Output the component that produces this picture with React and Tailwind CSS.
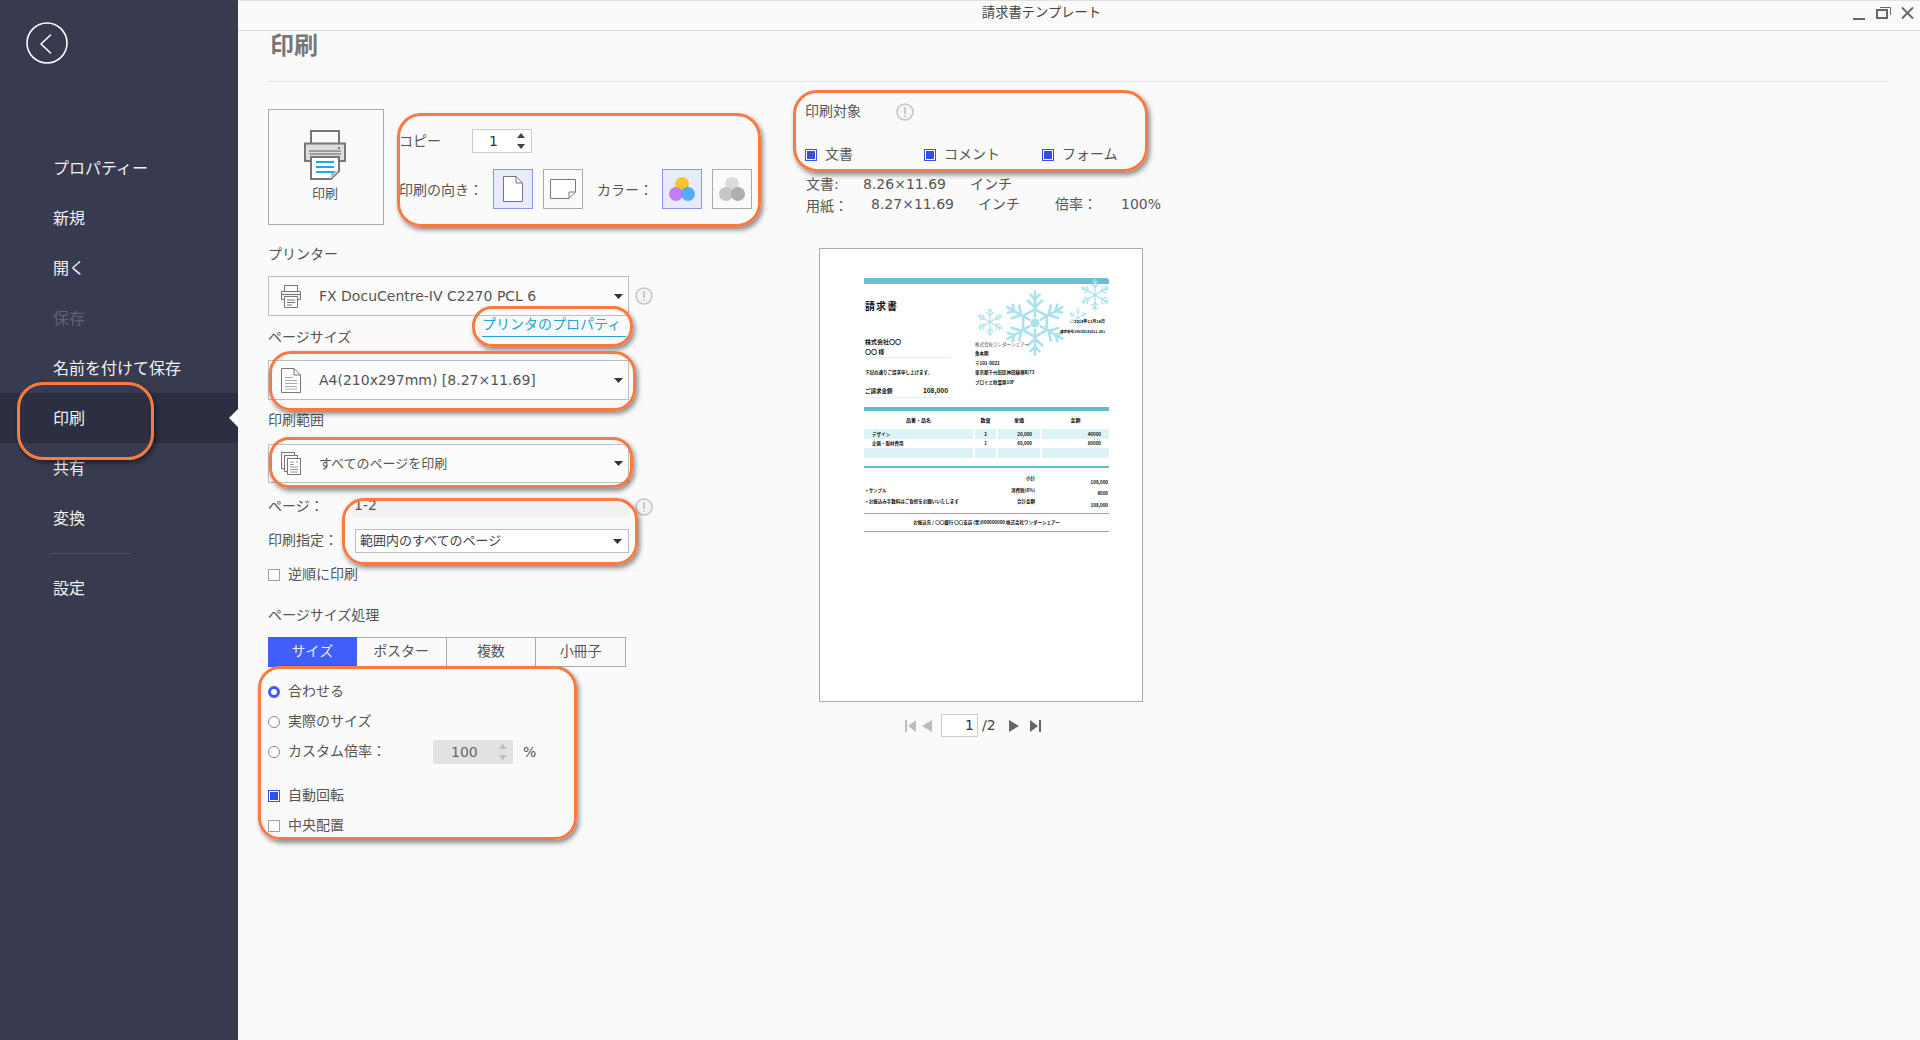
import React from "react";

const LATIN = "font-['DejaVu_Sans','Noto_Sans_CJK_JP',sans-serif]";

function Snowflake({ className, inner }) {
  const arms = [0, 60, 120, 180, 240, 300];
  return (
    <svg viewBox="-50 -50 100 100" className={className} fill="none" stroke="#ace2eb" strokeLinecap="round">
      {arms.map((a) => (
        <g key={a} transform={`rotate(${a})`} strokeWidth="4">
          <path d="M0 -10 V-48" />
          <path d="M0 -24 L-11 -34 M0 -24 L11 -34" />
          <path d="M0 -36 L-7 -43 M0 -36 L7 -43" />
        </g>
      ))}
      {inner ? <path d="M0 -21 L18 -10.5 V10.5 L0 21 L-18 10.5 V-10.5 Z" strokeWidth="4" /> : null}
      <circle r="7" fill="#ace2eb" stroke="none" />
    </svg>
  );
}

function Caret() {
  return (
    <svg width="9" height="5" viewBox="0 0 9 5" className="shrink-0">
      <path d="M0 0 H9 L4.5 5 Z" fill="#333" />
    </svg>
  );
}

function Info() {
  return (
    <svg width="18" height="18" viewBox="0 0 18 18" className="shrink-0">
      <circle cx="9" cy="9" r="8" fill="#f4f4f4" stroke="#c4c4c4" strokeWidth="1.5" />
      <path d="M9 4 V11 M9 12.6 V14" stroke="#bdbdbd" strokeWidth="1.6" />
    </svg>
  );
}

function BigPrinter() {
  return (
    <svg width="42" height="50" viewBox="0 0 42 50" fill="none">
      <rect x="7" y="1" width="28" height="14" fill="#fafafa" stroke="#777" strokeWidth="2" />
      <path d="M1 13.5 H41 V31 H1 Z" fill="#dedede" stroke="#777" strokeWidth="2" />
      <path d="M5 21 H37 M5 24 H37" stroke="#888" strokeWidth="1.3" />
      <rect x="34" y="17" width="2" height="2" fill="#777" />
      <path d="M7 27 H35 V41 L27 49 H7 Z" fill="#fff" stroke="#777" strokeWidth="2" />
      <path d="M27 49 V41 H35 Z" fill="#bbb" />
      <path d="M12 32 H30 M12 37 H30 M12 42 H30" stroke="#21a7e2" strokeWidth="2" />
    </svg>
  );
}

function SmallPrinter() {
  return (
    <svg width="20" height="23" viewBox="0 0 20 23" fill="none" stroke="#777" className="shrink-0">
      <rect x="3.5" y="0.5" width="13" height="6" />
      <path d="M3.5 14.5 H0.5 V6.5 H19.5 V14.5 H16.5" fill="#f2f2f2" />
      <path d="M1 9.5 H19" />
      <path d="M3.5 11.5 H16.5 V22.5 H3.5 Z" fill="#fff" />
      <path d="M6 15 H14 M6 17.5 H14 M6 20 H11" />
    </svg>
  );
}

function DocIcon() {
  return (
    <svg width="20" height="25" viewBox="0 0 20 25" fill="none" stroke="#777" className="shrink-0">
      <path d="M0.5 0.5 H13 L19.5 7 V24.5 H0.5 Z" fill="#fff" />
      <path d="M13 0.5 V7 H19.5" />
      <path d="M4 9.5 H12 M4 12.5 H16 M4 15.5 H16 M4 18.5 H16 M4 21 H16" stroke="#aaa" />
    </svg>
  );
}

function PagesIcon() {
  return (
    <svg width="20" height="23" viewBox="0 0 20 23" fill="none" stroke="#777" className="shrink-0">
      <rect x="0.5" y="0.5" width="13" height="16" fill="#fafafa" />
      <rect x="3.5" y="3.5" width="13" height="16" fill="#fafafa" />
      <rect x="6.5" y="6.5" width="13" height="16" fill="#fff" />
      <path d="M9 10 H13 M9 12.5 H13 M15 10 H17 M9 15 H17 M9 17.5 H17 M9 20 H17" stroke="#999" />
    </svg>
  );
}

function Select({ icon, children, latin, h }) {
  return (
    <div className={`flex items-center w-[361px] border border-[#bdbdbd] bg-[#fcfcfc] pl-[12px] pr-[5px] ${h}`}>
      {icon}
      <span className={`ml-[18px] flex-1 text-[#555] ${latin ? `${LATIN} text-[14px]` : "text-[13px] pb-[2px]"}`}>{children}</span>
      <Caret />
    </div>
  );
}

function Check({ checked }) {
  return checked ? (
    <span className="flex items-center justify-center shrink-0 w-[12px] h-[12px] border border-[#3b50e6] bg-white">
      <span className="w-[8px] h-[8px] bg-[#3450e4]" />
    </span>
  ) : (
    <span className="shrink-0 w-[12px] h-[12px] border border-[#a0a0a0] bg-white" />
  );
}

function Radio({ checked }) {
  return checked ? (
    <span className="shrink-0 w-[12px] h-[12px] rounded-full border-[3px] border-[#3f5cf0] bg-white" />
  ) : (
    <span className="shrink-0 w-[12px] h-[12px] rounded-full border border-[#8a8a8a] bg-white" />
  );
}

function Option({ control, children, cls }) {
  return (
    <div className={`flex items-center h-[20px] text-[14px] text-[#555] ${cls}`}>
      {control}
      <span className="ml-[8px] pb-[4px]">{children}</span>
    </div>
  );
}

function Stepper({ color }) {
  return (
    <svg width="8" height="18" viewBox="0 0 8 18">
      <path d="M4 1 L8 6 H0 Z M0 12 H8 L4 17 Z" fill={color} />
    </svg>
  );
}

const NAV = [
  { t: "プロパティー" },
  { t: "新規" },
  { t: "開く" },
  { t: "保存", dim: true },
  { t: "名前を付けて保存" },
  { t: "印刷", active: true },
  { t: "共有" },
  { t: "変換" },
];

function Sidebar() {
  return (
    <aside className="w-[238px] shrink-0 h-full bg-[#383b4f] flex flex-col">
      <div className="pl-[26px] pt-[22px]">
        <svg width="42" height="42" viewBox="0 0 42 42" fill="none" stroke="#fff" strokeWidth="1.6">
          <circle cx="21" cy="21" r="20" />
          <path d="M24.5 13 L15 22 L24.5 31" strokeLinecap="round" strokeLinejoin="round" />
        </svg>
      </div>
      <nav className="mt-[79px] flex flex-col">
        {NAV.map((n) => (
          <div
            key={n.t}
            className={`relative flex items-center h-[50px] pl-[53px] pb-[3px] text-[16px] ${n.active ? "bg-[#2c2e42]" : ""} ${n.dim ? "text-[#5f6272]" : "text-[#f2f2f2]"}`}
          >
            {n.t}
            {n.active ? (
              <span className="absolute right-0 top-[16px] w-0 h-0 border-y-[9px] border-y-transparent border-r-[9px] border-r-white" />
            ) : null}
          </div>
        ))}
      </nav>
      <div className="mt-[10px] ml-[50px] w-[80px] h-px bg-[#50536a]" />
      <div className="mt-[10px] flex items-center h-[50px] pl-[53px] pb-[5px] text-[16px] text-[#f2f2f2]">設定</div>
    </aside>
  );
}

function TitleBar() {
  return (
    <header className="relative h-[31px] shrink-0 border-t border-b border-t-[#e2e2e2] border-b-[#d6d6d6] flex items-center justify-center pr-[75px] pb-[8px] text-[13.3px] text-[#444]">
      請求書テンプレート
      <div className="absolute right-[6px] top-[5px] flex items-start gap-[10px]">
        <svg width="13" height="14" viewBox="0 0 13 14"><path d="M0 13 H12" stroke="#666" strokeWidth="2" /></svg>
        <svg width="15" height="14" viewBox="0 0 15 14" fill="none" stroke="#666">
          <rect x="1" y="4" width="10" height="8" strokeWidth="2" />
          <path d="M4 1.5 H14.5 V9" strokeWidth="1" />
        </svg>
        <svg width="13" height="14" viewBox="0 0 13 14" fill="none" stroke="#666" strokeWidth="1.8"><path d="M1 1.5 L12 12.5 M12 1.5 L1 12.5" /></svg>
      </div>
    </header>
  );
}

function PrintControls() {
  return (
    <div className="flex h-[116px]">
      <div className="w-[116px] h-[116px] shrink-0 border border-[#aaa] flex flex-col items-center pt-[20px] pr-[2px] text-[13px] text-[#555]">
        <BigPrinter />
        <span className="mt-[3px]">印刷</span>
      </div>
      <div className="ml-[15px] pt-[20px] text-[14px] text-[#555]">
        <div className="flex items-center h-[24px]">
          <span className="w-[73px] pb-[2px]">コピー</span>
          <div className="flex items-center w-[60px] h-[24px] border border-[#ccc] bg-white pl-[16px] pr-[6px] justify-between">
            <span className={`${LATIN} text-[14px] text-[#333]`}>1</span>
            <Stepper color="#444" />
          </div>
        </div>
        <div className="flex items-center h-[40px] mt-[16px]">
          <span className="w-[94px]">印刷の向き：</span>
          <div className="w-[40px] h-[40px] border border-[#8a94ef] bg-[#e8ebfb] flex items-center justify-center">
            <svg width="20" height="26" viewBox="0 0 20 26" fill="none" stroke="#777">
              <path d="M0.5 0.5 H13 L19.5 7 V25.5 H0.5 Z" fill="#fff" />
              <path d="M13 0.5 V7 H19.5" />
            </svg>
          </div>
          <div className="ml-[10px] w-[40px] h-[40px] border border-[#aaa] flex items-center justify-center">
            <svg width="26" height="20" viewBox="0 0 26 20" fill="none" stroke="#777">
              <path d="M0.5 0.5 H25.5 V13 L19 19.5 H0.5 Z" fill="#fff" />
              <path d="M19 19.5 V13 H25.5" />
            </svg>
          </div>
          <span className="ml-[14px] w-[65px]">カラー：</span>
          <div className="w-[40px] h-[40px] border border-[#8a94ef] bg-[#e8ebfb] flex items-center justify-center">
            <svg width="26" height="24" viewBox="0 0 26 24">
              <circle cx="13" cy="7" r="7" fill="#f7c62f" />
              <circle cx="7" cy="17" r="7" fill="#bf78ee" opacity="0.95" />
              <circle cx="19" cy="17" r="7" fill="#4aa9f5" opacity="0.95" />
            </svg>
          </div>
          <div className="ml-[10px] w-[40px] h-[40px] border border-[#aaa] flex items-center justify-center">
            <svg width="26" height="24" viewBox="0 0 26 24">
              <circle cx="13" cy="7" r="7" fill="#dcdcdc" />
              <circle cx="7" cy="17" r="7" fill="#c6c6c6" />
              <circle cx="19" cy="17" r="7" fill="#aeaeae" />
            </svg>
          </div>
        </div>
      </div>
    </div>
  );
}

function LeftColumn() {
  return (
    <div className="w-[537px] shrink-0 pt-[27px] text-[14px] text-[#555]">
      <PrintControls />

      <div className="mt-[20px] h-[20px] leading-[17px]">プリンター</div>
      <div className="mt-[11px] flex items-center">
        <Select icon={<SmallPrinter />} latin h="h-[40px]">FX DocuCentre-IV C2270 PCL 6</Select>
        <span className="ml-[6px]"><Info /></span>
      </div>
      <div className="ml-[214px] w-[144px] h-[21px] border-b border-[#1ba6dc] text-[14px] leading-[15px] text-[#1ba6dc] whitespace-nowrap">
        プリンタのプロパティ
      </div>

      <div className="mt-[-9px] h-[20px] leading-[16px]">ページサイズ</div>
      <div className="mt-[12px]">
        <Select icon={<DocIcon />} latin h="h-[40px]">A4(210x297mm) [8.27×11.69]</Select>
      </div>

      <div className="mt-[11px] h-[20px] leading-[17px]">印刷範囲</div>
      <div className="mt-[13px]">
        <Select icon={<PagesIcon />} h="h-[39px]">すべてのページを印刷</Select>
      </div>

      <div className="mt-[14px] flex items-center h-[20px] leading-[17px]">
        <span className="w-[84px] h-[20px]">ページ：</span>
        <span className={`w-[277px] h-[20px] bg-[#f1f1f1] ${LATIN} text-[14px] leading-[17px] text-[#555] pl-[2px]`}>1-2</span>
        <span className="ml-[6px]"><Info /></span>
      </div>
      <div className="mt-[12px] flex items-center h-[24px]">
        <span className="w-[87px] pb-[3px]">印刷指定：</span>
        <div className="w-[274px] h-[24px] border border-[#bdbdbd] bg-white flex items-center pl-[4px] pr-[6px] justify-between text-[13px] text-[#444]">
          <span className="pb-[2px]">範囲内のすべてのページ</span>
          <Caret />
        </div>
      </div>
      <Option control={<Check />} cls="mt-[12px]">逆順に印刷</Option>

      <div className="mt-[21px] h-[20px] leading-[16px]">ページサイズ処理</div>
      <div className="mt-[11px] flex w-[358px] h-[30px] text-[14px]">
        <div className="flex-1 flex items-center justify-center pb-[3px] bg-[#3f5efb] text-[#e8ecff]">サイズ</div>
        <div className="flex-1 flex items-center justify-center pb-[3px] border border-l-0 border-[#aaa]">ポスター</div>
        <div className="flex-1 flex items-center justify-center pb-[3px] border border-l-0 border-[#aaa]">複数</div>
        <div className="flex-1 flex items-center justify-center pb-[3px] border border-l-0 border-[#aaa]">小冊子</div>
      </div>

      <Option control={<Radio checked />} cls="mt-[15px]">合わせる</Option>
      <Option control={<Radio />} cls="mt-[10px]">実際のサイズ</Option>
      <div className="mt-[8px] flex items-center h-[24px]">
        <Radio />
        <span className="ml-[8px] w-[145px] pb-[4px]">カスタム倍率：</span>
        <div className="w-[80px] h-[24px] bg-[#e2e2e2] flex items-center justify-between pl-[18px] pr-[6px]">
          <span className={`${LATIN} text-[14px] text-[#666]`}>100</span>
          <Stepper color="#bdbdbd" />
        </div>
        <span className={`ml-[10px] ${LATIN} text-[14px]`}>%</span>
      </div>
      <Option control={<Check checked />} cls="mt-[22px]">自動回転</Option>
      <Option control={<Check />} cls="mt-[10px]">中央配置</Option>
    </div>
  );
}

function TinyRow({ children, cls }) {
  return <div className={`flex items-center font-bold text-[#111] ${cls}`}>{children}</div>;
}

function Invoice() {
  const cols = "grid grid-cols-[109px_21px_42px_67px] gap-x-[2px]";
  return (
    <div className="relative w-[245px] text-[#111]">
      <div className="h-[6px] bg-[#6cbbd7] rounded-tr-[3px]" />
      <Snowflake inner className="absolute left-[138px] top-[12px] w-[66px] h-[66px]" />
      <Snowflake className="absolute left-[112px] top-[30px] w-[28px] h-[28px]" />
      <Snowflake className="absolute left-[215px] top-[1px] w-[32px] h-[32px]" />
      <Snowflake className="absolute left-[204px] top-[30px] w-[20px] h-[20px]" />

      <div className="relative flex h-[123px]">
        <div className="w-[111px] pl-[1px]">
          <div className="mt-[16px] h-[12px] leading-[12px] text-[10px] font-bold tracking-[1px]">請求書</div>
          <div className="mt-[26px] h-[8px] leading-[8px] text-[6px] font-bold">株式会社〇〇</div>
          <div className="mt-[2px] h-[8px] leading-[8px] text-[6px] font-bold">〇〇 様</div>
          <div className="mt-[1px] w-[86px] h-px bg-[#def3f8]" />
          <TinyRow cls="mt-[11px] h-[6px] text-[4.5px]">下記の通りご請求申し上げます。</TinyRow>
          <div className="mt-[12px] flex justify-between items-center w-[83px] h-[8px] text-[5.5px] font-bold">
            <span>ご請求金額</span>
            <span className="text-[6.5px]">108,000</span>
          </div>
          <div className="mt-[2px] w-[86px] h-px bg-[#def3f8]" />
        </div>
        <div className="flex-1 relative">
          <div className="absolute right-[4px] top-[34px] text-[4px] font-bold whitespace-nowrap">2018年11月16日</div>
          <div className="absolute right-[4px] top-[45px] text-[3.5px] font-bold whitespace-nowrap">請求番号:INV20181611-261</div>
          <TinyRow cls="mt-[57px] h-[6px] text-[4.5px] text-[#444] font-normal">株式会社ワンダーシェアー</TinyRow>
          <TinyRow cls="mt-[3px] h-[6px] text-[4.5px]">魚本剛</TinyRow>
          <TinyRow cls="mt-[4px] h-[6px] text-[4.5px]">〒101-0022</TinyRow>
          <TinyRow cls="mt-[3px] h-[6px] text-[4.5px]">東京都千代田区神田練塀町73</TinyRow>
          <TinyRow cls="mt-[4px] h-[6px] text-[4.5px]">プロミエ秋葉原10F</TinyRow>
        </div>
      </div>

      <div className="h-[4px] bg-[#66bbd3]" />
      <div className={`${cols} h-[18px] items-center text-center text-[5px] font-bold`}>
        <span>品番・品名</span><span>数量</span><span>単価</span><span>金額</span>
      </div>
      <div className={`${cols} h-[10px] items-center bg-white text-[4.5px] font-bold`}>
        <span className="h-full bg-[#def3f8] pl-[8px] leading-[10px]">デザイン</span>
        <span className="h-full bg-[#def3f8] text-center leading-[10px]">2</span>
        <span className="h-full bg-[#def3f8] text-right pr-[8px] leading-[10px]">20,000</span>
        <span className="h-full bg-[#def3f8] text-right pr-[8px] leading-[10px]">40000</span>
      </div>
      <div className={`${cols} h-[9px] items-center text-[4.5px] font-bold`}>
        <span className="pl-[8px]">企画・取材費用</span>
        <span className="text-center">1</span>
        <span className="text-right pr-[8px]">60,000</span>
        <span className="text-right pr-[8px]">60000</span>
      </div>
      <div className={`${cols} h-[10px]`}>
        <span className="bg-[#def3f8]" /><span className="bg-[#def3f8]" /><span className="bg-[#def3f8]" /><span className="bg-[#def3f8]" />
      </div>
      <div className="mt-[8px] h-[2px] bg-[#5fbcd2]" />

      <div className="mt-[7px] grid grid-cols-[144px_27px_73px] grid-rows-[12px_11px_12px] text-[4.5px] font-bold h-[38px]">
        <span />
        <span className="text-right">小計</span>
        <span className="text-right pt-[4px]">108,000</span>
        <span className="pl-[2px]">• サンプル</span>
        <span className="text-right whitespace-nowrap">消費税(8%)</span>
        <span className="text-right pt-[3px]">8000</span>
        <span className="pl-[2px] whitespace-nowrap">• お振込み手数料はご負担をお願いいたします</span>
        <span className="text-right whitespace-nowrap">合計金額</span>
        <span className="text-right pt-[4px]">108,000</span>
      </div>
      <div className="h-px bg-[#5fbcd2]" />
      <div className="h-[17px] flex items-center justify-center text-[4.5px] font-bold">
        お振込先 / 〇〇銀行 〇〇支店 (普)000000000 株式会社ワンダーシェアー
      </div>
      <div className="h-px bg-[#5fbcd2]" />
    </div>
  );
}

function Pager() {
  return (
    <div className="mt-[12px] ml-[100px] flex items-center h-[23px]">
      <svg width="11" height="12" viewBox="0 0 11 12"><path d="M0 0 H2 V12 H0 Z M11 0 V12 L3 6 Z" fill="#bcbcbc" /></svg>
      <svg width="10" height="12" viewBox="0 0 10 12" className="ml-[6px]"><path d="M10 0 V12 L0 6 Z" fill="#bcbcbc" /></svg>
      <div className={`ml-[9px] w-[37px] h-[23px] border border-[#ccc] bg-white text-right pr-[3px] leading-[21px] ${LATIN} text-[14px] text-[#333]`}>1</div>
      <span className={`ml-[4px] w-[14px] ${LATIN} text-[14px] text-[#444]`}>/2</span>
      <svg width="10" height="12" viewBox="0 0 10 12" className="ml-[13px]"><path d="M0 0 V12 L10 6 Z" fill="#666" /></svg>
      <svg width="11" height="12" viewBox="0 0 11 12" className="ml-[11px]"><path d="M0 0 V12 L8 6 Z M9 0 H11 V12 H9 Z" fill="#666" /></svg>
    </div>
  );
}

function RightColumn() {
  const ck = (label, w) => (
    <div className={`flex items-center ${w}`}>
      <Check checked />
      <span className="ml-[8px] pb-[3px]">{label}</span>
    </div>
  );
  return (
    <div className="flex-1 pt-[20px] text-[14px] text-[#555]">
      <div className="flex items-center h-[20px]">
        <span className="w-[91px] pb-[3px]">印刷対象</span>
        <Info />
      </div>
      <div className="mt-[23px] flex h-[20px]">
        {ck("文書", "w-[119px]")}
        {ck("コメント", "w-[118px]")}
        {ck("フォーム", "w-[118px]")}
      </div>
      <div className={`mt-[9px] flex items-center h-[20px] pl-[1px] ${LATIN} text-[14px]`}>
        <span className="w-[57px]">文書:</span>
        <span className="w-[107px]">8.26×11.69</span>
        <span>インチ</span>
      </div>
      <div className={`flex items-center h-[20px] pl-[1px] ${LATIN} text-[14px]`}>
        <span className="w-[65px] pt-[4px]">用紙：</span>
        <span className="w-[107px]">8.27×11.69</span>
        <span className="w-[77px]">インチ</span>
        <span className="w-[66px]">倍率：</span>
        <span>100%</span>
      </div>
      <div className="mt-[34px] ml-[14px] w-[324px] h-[454px] border border-[#aaa] bg-white pl-[44px] pt-[29px]">
        <Invoice />
      </div>
      <Pager />
    </div>
  );
}

const CALL = "absolute border-[3px] border-[#fb7a42] shadow-[2px_3px_5px_rgba(0,0,0,0.45)] pointer-events-none";

export default function App() {
  return (
    <div className="relative flex w-[1920px] h-[1040px] overflow-hidden bg-[#fafafa] font-['Noto_Sans_CJK_JP','Noto_Sans',sans-serif]">
      <Sidebar />
      <main className="flex-1 flex flex-col">
        <TitleBar />
        <div className="pl-[30px] pr-[32px]">
          <div className="h-[51px] border-b border-[#e0e0e0] text-[24px] font-bold leading-[26px] text-[#777] pl-[2px]">印刷</div>
          <div className="flex">
            <LeftColumn />
            <RightColumn />
          </div>
        </div>
      </main>

      <div className={`${CALL} left-[17px] top-[382px] w-[137px] h-[78px] rounded-[26px]`} />
      <div className={`${CALL} left-[397px] top-[113px] w-[364px] h-[114px] rounded-[24px]`} />
      <div className={`${CALL} left-[472px] top-[306px] w-[161px] h-[41px] rounded-[20px]`} />
      <div className={`${CALL} left-[269px] top-[351px] w-[367px] h-[60px] rounded-[22px]`} />
      <div className={`${CALL} left-[269px] top-[437px] w-[364px] h-[51px] rounded-[20px]`} />
      <div className={`${CALL} left-[342px] top-[498px] w-[296px] h-[67px] rounded-[22px]`} />
      <div className={`${CALL} left-[258px] top-[666px] w-[319px] h-[174px] rounded-[22px]`} />
      <div className={`${CALL} left-[793px] top-[90px] w-[355px] h-[82px] rounded-[24px]`} />
    </div>
  );
}
